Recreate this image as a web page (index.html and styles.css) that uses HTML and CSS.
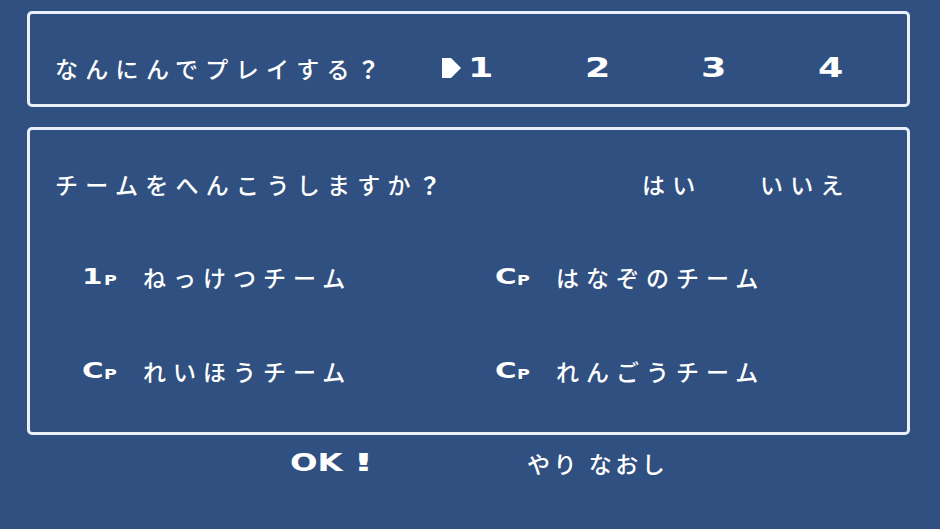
FILE: index.html
```html
<!DOCTYPE html>
<html lang="ja">
<head>
<meta charset="utf-8">
<title>チームせんたく</title>
<link rel="stylesheet" href="styles.css">
</head>
<body>
<div class="screen">
  <section class="box box-players">
    <div class="row">
      <span class="jp prompt-players">なんにんでプレイする<span class="qm">？</span></span>
      <div class="counts">
        <span class="cursor"><svg width="20" height="20" viewBox="0 0 20 20" aria-hidden="true"><polygon points="0,0 9,0 19,10 9,20 0,20" fill="#ffffff"/></svg></span>
        <span class="num"><span class="glyph">1</span></span>
        <span class="num"><span class="glyph">2</span></span>
        <span class="num"><span class="glyph">3</span></span>
        <span class="num num-last"><span class="glyph">4</span></span>
      </div>
    </div>
  </section>

  <section class="box box-teams">
    <div class="row row-question">
      <span class="jp prompt-change">チームをへんこうしますか<span class="qm">？</span></span>
      <span class="jp opt opt-yes">はい</span>
      <span class="jp opt">いいえ</span>
    </div>
    <div class="row row-teams">
      <div class="team">
        <span class="badge"><span class="badge-main">1</span><span class="badge-p">P</span></span>
        <span class="jp">ねっけつチーム</span>
      </div>
      <div class="team">
        <span class="badge"><span class="badge-main">C</span><span class="badge-p">P</span></span>
        <span class="jp">はなぞのチーム</span>
      </div>
    </div>
    <div class="row row-teams row-last">
      <div class="team">
        <span class="badge"><span class="badge-main">C</span><span class="badge-p">P</span></span>
        <span class="jp">れいほうチーム</span>
      </div>
      <div class="team">
        <span class="badge"><span class="badge-main">C</span><span class="badge-p">P</span></span>
        <span class="jp">れんごうチーム</span>
      </div>
    </div>
  </section>

  <div class="footer">
    <span class="ok"><span class="glyph">OK</span><span class="bang">!</span></span>
    <span class="jp redo">やり なおし</span>
  </div>
</div>
</body>
</html>
```

FILE: styles.css
```css
* {
  box-sizing: border-box;
}

html, body {
  margin: 0;
  padding: 0;
}

body {
  width: 940px;
  height: 529px;
  overflow: hidden;
  background: #2f5080;
  color: #ffffff;
  font-family: "Noto Sans CJK JP", "Noto Sans", sans-serif;
}

.screen {
  display: flex;
  flex-direction: column;
  padding: 11px 30px 0 27px;
}

.box {
  border: 3px solid #e9f0fb;
  border-radius: 5px;
}

.row {
  display: flex;
  align-items: center;
  height: 40px;
}

.jp {
  flex-shrink: 0;
  font-size: 23px;
  font-weight: 500;
  letter-spacing: 7.3px;
  line-height: 40px;
  white-space: pre;
}

.qm {
  font-weight: 700;
}

.box-players {
  height: 96px;
  padding: 34px 0 16px 25px;
}

.prompt-players {
  width: 387px;
}

.counts {
  display: flex;
  align-items: center;
  flex-shrink: 0;
}

.cursor {
  display: flex;
  align-items: center;
  width: 26px;
  height: 40px;
}

.num {
  width: 117px;
  font-family: "DejaVu Sans", sans-serif;
  font-weight: 700;
  font-size: 27px;
  line-height: 40px;
}

.num:nth-child(3) {
  width: 116px;
}

.num-last {
  width: auto;
}

.glyph {
  display: inline-block;
  transform: scaleX(1.35);
  transform-origin: left center;
}

.box-teams {
  height: 308px;
  margin-top: 20px;
  padding: 34px 0 41px 25px;
  display: flex;
  flex-direction: column;
  gap: 53px;
}

.prompt-change {
  width: 587px;
}

.opt-yes {
  width: 118px;
}

.row-teams {
  padding-left: 27px;
}

.row-last {
  margin-top: 1px;
}

.team {
  display: flex;
  align-items: center;
  width: 413px;
  flex-shrink: 0;
}

.team .jp {
  letter-spacing: 7px;
}

.badge {
  display: flex;
  align-items: flex-end;
  width: 61px;
  height: 22px;
  font-family: "DejaVu Sans", sans-serif;
  font-weight: 700;
  line-height: 1;
}

.badge-main {
  display: inline-block;
  width: 22px;
  font-size: 21px;
  transform: scaleX(1.4);
  transform-origin: left bottom;
}

.badge-p {
  display: inline-block;
  font-size: 14px;
  padding-bottom: 1px;
  transform: scaleX(1.25);
  transform-origin: left bottom;
}

.footer {
  display: flex;
  align-items: center;
  height: 40px;
  margin-top: 8px;
  padding-left: 263px;
}

.ok {
  display: flex;
  align-items: center;
  width: 237px;
  flex-shrink: 0;
  font-family: "DejaVu Sans", sans-serif;
  font-weight: 700;
  font-size: 24px;
  line-height: 40px;
}

.bang {
  display: inline-block;
  margin-left: 29px;
  font-size: 24px;
  transform: scaleX(2);
}

.redo {
  letter-spacing: 3.5px;
}
```
